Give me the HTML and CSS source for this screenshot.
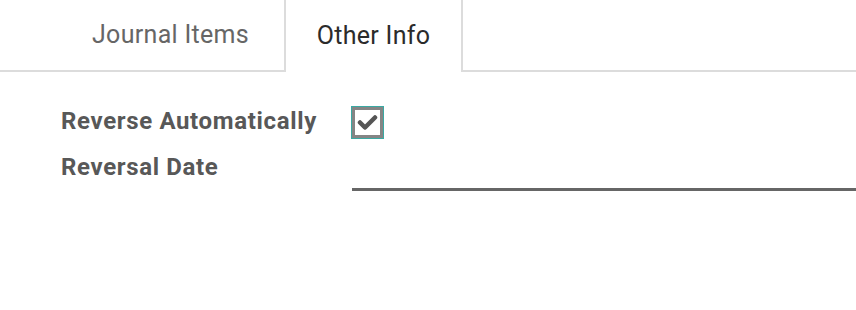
FILE: index.html
```html
<!DOCTYPE html>
<html>
<head>
<meta charset="utf-8">
<link rel="stylesheet" href="styles.css">
</head>
<body>
<div class="tabs">
  <div class="tab">Journal Items</div>
  <div class="tab active">Other Info</div>
</div>
<div class="form">
  <div class="label first">Reverse Automatically</div>
  <div class="field">
    <span class="checkbox">
      <svg width="21" height="17" viewBox="0 0 21 17"><path d="M3 8.5 L8 13.5 L18 3.5" fill="none" stroke="#555" stroke-width="4.5" stroke-linecap="round" stroke-linejoin="round"/></svg>
    </span>
  </div>
  <div class="label">Reversal Date</div>
  <div class="field"><div class="date-input"></div></div>
</div>
</body>
</html>
```
FILE: styles.css
```css
html, body {
  margin: 0;
  padding: 0;
  background: #fff;
  font-family: Roboto, "Liberation Sans", sans-serif;
  overflow: hidden;
}
.tabs {
  display: flex;
  padding-left: 61px;
  border-bottom: 2px solid #dcdcdc;
  height: 70px;
}
.tab {
  width: 223px;
  box-sizing: border-box;
  display: flex;
  align-items: center;
  justify-content: center;
  font-size: 25px;
  letter-spacing: 0.3px;
  color: #666;
  padding: 0 4px 1px 0;
}
.tab.active {
  width: 179px;
  color: #2b2b2b;
  background: #fff;
  border-left: 2px solid #dcdcdc;
  border-right: 2px solid #dcdcdc;
  height: 72px;
  padding: 0 0 1px 0;
}
.form {
  display: grid;
  grid-template-columns: 291px 1fr;
  padding-left: 61px;
  padding-top: 35px;
  row-gap: 4px;
  align-items: center;
}
.label {
  font-weight: bold;
  font-size: 24px;
  letter-spacing: 0.65px;
  color: #585858;
}
.label.first {
  margin-top: -3px;
}
.field {
  display: flex;
  align-items: center;
}
.checkbox {
  width: 25px;
  height: 25px;
  border: 3px solid #858585;
  outline: 1px solid #3aa9a3;
  display: flex;
  align-items: center;
  justify-content: center;
  background: #fff;
}
.date-input {
  width: 100%;
  height: 34px;
  border-bottom: 3px solid #666;
  margin-top: 12px;
}
```
